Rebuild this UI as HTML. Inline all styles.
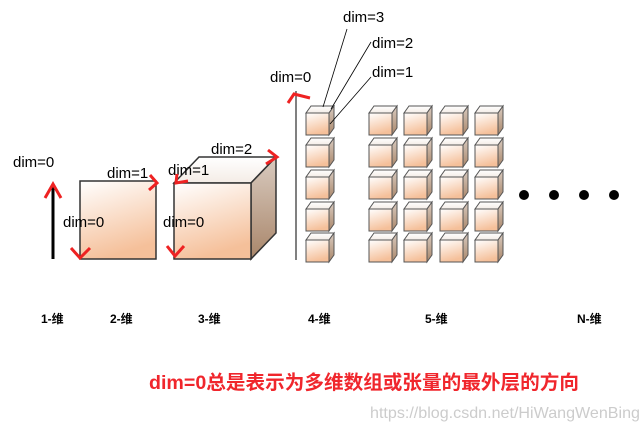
<!DOCTYPE html>
<html><head><meta charset="utf-8"><style>
html,body{margin:0;padding:0;background:#fff;width:643px;height:433px;overflow:hidden}
svg{display:block}
text{font-family:"Liberation Sans","Noto Sans CJK SC",sans-serif}
</style></head><body>
<svg width="643" height="433" viewBox="0 0 643 433" xmlns="http://www.w3.org/2000/svg">
<defs>
<linearGradient id="fg" x1="0" y1="0" x2="0.3" y2="1"><stop offset="0" stop-color="#fff"/><stop offset="1" stop-color="#f5c09a"/></linearGradient>
<linearGradient id="sg" x1="0" y1="0" x2="0" y2="1"><stop offset="0" stop-color="#d9cbc0"/><stop offset="1" stop-color="#a9866a"/></linearGradient>
<linearGradient id="tg" x1="0" y1="0" x2="0" y2="1"><stop offset="0" stop-color="#fff"/><stop offset="1" stop-color="#f4ece6"/></linearGradient>
<g id="c" stroke="#555" stroke-width="1">
<polygon points="0,0 5,-7 28,-7 23,0" fill="url(#tg)"/>
<polygon points="23,0 28,-7 28,15 23,22" fill="url(#sg)"/>
<rect x="0" y="0" width="23" height="22" fill="url(#fg)"/>
</g>
</defs>
<!-- 1D -->
<line x1="53" y1="186" x2="53" y2="259" stroke="#000" stroke-width="3"/>
<path d="M45,198 L53,184 L61,198" fill="none" stroke="#e22" stroke-width="3"/>
<text x="13" y="167" font-size="15">dim=0</text>
<!-- 2D -->
<rect x="80" y="181" width="76" height="78" fill="url(#fg)" stroke="#333" stroke-width="1.5"/>
<text x="107" y="178" font-size="15">dim=1</text>
<text x="63" y="227" font-size="15">dim=0</text>
<path d="M150,175 L157,183 L149,190" fill="none" stroke="#e22" stroke-width="3"/>
<path d="M71,248 L80,258 L90,248" fill="none" stroke="#e22" stroke-width="3"/>
<!-- 3D -->
<polygon points="174,183 199,157 276,157 251,183" fill="url(#tg)" stroke="#333" stroke-width="1.5"/>
<polygon points="251,183 276,157 276,233 251,259" fill="url(#sg)" stroke="#333" stroke-width="1.5"/>
<rect x="174" y="183" width="77" height="76" fill="url(#fg)" stroke="#333" stroke-width="1.5"/>
<text x="211" y="154" font-size="15">dim=2</text>
<text x="168" y="175" font-size="15">dim=1</text>
<text x="163" y="227" font-size="15">dim=0</text>
<path d="M268,150 L277,157 L266,164" fill="none" stroke="#e22" stroke-width="3"/>
<path d="M177,174 L176,183 L188,181" fill="none" stroke="#e22" stroke-width="3"/>
<path d="M167,246 L175,256 L184,246" fill="none" stroke="#e22" stroke-width="3"/>
<!-- 4D -->
<line x1="296" y1="91" x2="296" y2="260" stroke="#000" stroke-width="1"/>
<path d="M288,103 L294,94 L310,98" fill="none" stroke="#e22" stroke-width="3"/>
<text x="270" y="82" font-size="15">dim=0</text>
<text x="343" y="22" font-size="15">dim=3</text>
<text x="372" y="48" font-size="15">dim=2</text>
<text x="372" y="77" font-size="15">dim=1</text>
<use href="#c" x="306" y="113"/><use href="#c" x="306" y="145"/><use href="#c" x="306" y="177"/><use href="#c" x="306" y="209"/><use href="#c" x="306" y="240"/>
<line x1="347" y1="29" x2="323" y2="107" stroke="#000" stroke-width="0.8"/>
<line x1="371" y1="42" x2="331" y2="109" stroke="#000" stroke-width="0.8"/>
<line x1="371" y1="77" x2="330" y2="124" stroke="#000" stroke-width="0.8"/>
<!-- 5D -->
<use href="#c" x="369" y="113"/><use href="#c" x="369" y="145"/><use href="#c" x="369" y="177"/><use href="#c" x="369" y="209"/><use href="#c" x="369" y="240"/>
<use href="#c" x="404" y="113"/><use href="#c" x="404" y="145"/><use href="#c" x="404" y="177"/><use href="#c" x="404" y="209"/><use href="#c" x="404" y="240"/>
<use href="#c" x="440" y="113"/><use href="#c" x="440" y="145"/><use href="#c" x="440" y="177"/><use href="#c" x="440" y="209"/><use href="#c" x="440" y="240"/>
<use href="#c" x="475" y="113"/><use href="#c" x="475" y="145"/><use href="#c" x="475" y="177"/><use href="#c" x="475" y="209"/><use href="#c" x="475" y="240"/>
<!-- dots -->
<circle cx="524" cy="195" r="5" fill="#000"/><circle cx="554" cy="195" r="5" fill="#000"/><circle cx="584" cy="195" r="5" fill="#000"/><circle cx="614" cy="195" r="5" fill="#000"/>
<!-- bottom labels -->
<g font-size="12" font-weight="bold">
<text x="41" y="323">1-维</text><text x="110" y="323">2-维</text><text x="198" y="323">3-维</text>
<text x="308" y="323">4-维</text><text x="425" y="323">5-维</text><text x="577" y="323">N-维</text>
</g>
<text x="149" y="389" font-size="19.5" font-weight="bold" fill="#f0262c" textLength="430" lengthAdjust="spacingAndGlyphs">dim=0总是表示为多维数组或张量的最外层的方向</text>
<text x="370" y="418" font-size="16" fill="#ccc" textLength="270" lengthAdjust="spacingAndGlyphs">https://blog.csdn.net/HiWangWenBing</text>
</svg>
</body></html>
